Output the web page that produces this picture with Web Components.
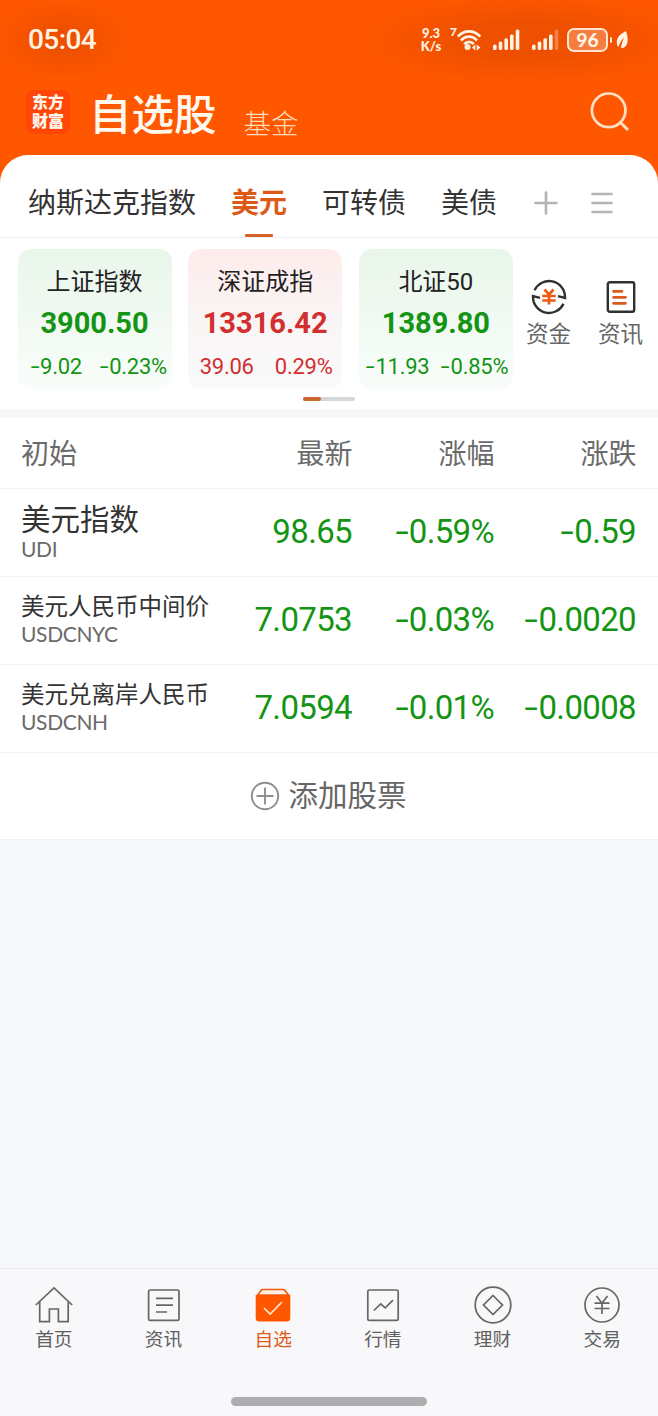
<!DOCTYPE html>
<html lang="zh-CN">
<head>
<meta charset="utf-8">
<meta name="viewport" content="width=device-width, initial-scale=1">
<title>自选股</title>
<style>
  body {
    margin: 0;
    background: #f7f8fa;
    font-family: Roboto, "Noto Sans CJK SC", sans-serif;
  }
</style>
</head>
<body>
<watch-app></watch-app>

<script>
const ICONS = {
  wifi: [26, 26, `
    <g fill="none" stroke="#fff3e4" stroke-width="2.7">
      <path d="M1.800 9.600C8 2.600 18 2.600 24.200 9.600"/>
      <path d="M5 13.500C9.500 8.400 16.500 8.400 21 13.500"/>
      <path d="M8.200 17.200C11 14.200 15 14.200 17.800 17.200"/>
    </g>
    <circle cx="11.500" cy="20" r="3" fill="#fff3e4"/>
    <path fill="#fff3e4" d="M19.300 17.500v6l-3.300-3zM20.700 17.500v6l3.800-3z"/>`],
  signal: [28, 22, `
    <g fill="#fff3e4">
      <rect x="1" y="15.500" width="3.600" height="5.500" rx="1.500"/>
      <rect x="6.700" y="12.500" width="3.600" height="8.500" rx="1.500"/>
      <rect x="12.400" y="9.300" width="3.600" height="11.700" rx="1.500"/>
      <rect x="18" y="5.500" width="3.600" height="15.500" rx="1.500"/>
      <rect class="last" x="23.700" y="0.500" width="3.600" height="20.500" rx="1.500"/>
    </g>`],
  leaf: [14, 18, `
    <path fill="#fff3e4" d="M9.800 0C4.500 3 .8 6 .8 11.500c0 2 .6 3.500 1.700 4.700C3.500 12 5.500 9 8.200 6.200 6.500 10 5.500 13 5 17.300c4.500-.3 6.700-3.800 6.700-8.800 0-3-.9-6-1.900-8.500z"/>`],
  search: [42, 42, `
    <g fill="none" stroke="#ffe0c4" stroke-width="2.700">
      <circle cx="19.700" cy="18.300" r="16.800"/>
      <path d="M31 30l8 8" stroke-width="3"/>
    </g>`],
  plus: [24, 24, `
    <path d="M1.500 12h21M12 1.500v21" fill="none" stroke="#b5b5b5" stroke-width="2.700" stroke-linecap="round"/>`],
  menu: [22, 22, `
    <path d="M1.500 2h19M1.500 11h19M1.500 20h19" fill="none" stroke="#b5b5b5" stroke-width="2.700" stroke-linecap="round"/>`],
  funds: [36, 36, `
    <g fill="none" stroke="#303030" stroke-width="2.400">
      <path d="M3.500 11.300A16 16 0 0 1 34 18v1l-7-1.800"/>
      <path d="M32.500 24.700A16 16 0 0 1 2 18v-1l7 1.800"/>
    </g>
    <path d="M13.500 10.500l4.500 5 4.500-5M11.300 17h13.400M11.300 21.500h13.400M18 16v9.500" fill="none" stroke="#ee5a10" stroke-width="2.700"/>`],
  article: [30, 34, `
    <rect x="1.800" y="2.200" width="26.400" height="29.600" rx="2" fill="none" stroke="#303030" stroke-width="2.400"/>
    <path d="M7.500 11.300h8.500M7.500 17.300h12M7.500 23.300h12" fill="none" stroke="#dd5a1c" stroke-width="2.700" stroke-linecap="round"/>`],
  add: [30, 30, `
    <g fill="none" stroke="#8f8f8f" stroke-width="1.900">
      <circle cx="15" cy="15" r="13.200"/>
      <path d="M6.500 15h17M15 6.500v17"/>
    </g>`],
  home: [40, 40, `
    <path d="M1.800 20L20 2.800 38.200 20M5.700 17v19.700h9.700V24h9v12.700h9.800V17" fill="none" stroke="#666" stroke-width="1.700"/>`],
  news: [40, 40, `
    <g fill="none" stroke="#666" stroke-width="1.700">
      <rect x="4.600" y="5" width="30.400" height="30.400" rx="1.500"/>
      <path d="M12 13.400h17M12 20.200h17M12 27h11"/>
    </g>`],
  watch: [40, 40, `
    <path d="M4.500 10l4.400-5.500h22.200L35.500 10z" fill="#fff1e4" stroke="#ee5a10" stroke-width="1.700"/>
    <path d="M2.700 10h34.600v23a3.500 3.500 0 0 1-3.500 3.500H6.200A3.500 3.500 0 0 1 2.700 33z" fill="#ff5600"/>
    <path d="M11 23l6.200 6L29 17" fill="none" stroke="#ffe9d0" stroke-width="1.700"/>`],
  market: [40, 40, `
    <g fill="none" stroke="#666" stroke-width="1.700">
      <rect x="4.800" y="5" width="30.400" height="30.400" rx="1.500"/>
      <path d="M10.800 25.500l7-6.700 4.400 4L30 15.200"/>
    </g>`],
  wealth: [40, 40, `
    <g fill="none" stroke="#666" stroke-width="1.700">
      <circle cx="20" cy="20" r="17.800"/>
      <path d="M20 10.500l9.500 9.500-9.500 9.500-9.500-9.500z"/>
    </g>`],
  trade: [40, 40, `
    <g fill="none" stroke="#666" stroke-width="1.700">
      <circle cx="20" cy="20" r="17"/>
      <path d="M14.500 11l5.500 7.200 5.500-7.200M12.500 18.200h15M12.500 23.500h15M20 18v11"/>
    </g>`]
};

class UiIcon extends HTMLElement {
  connectedCallback() {
    const [width, height, body] = ICONS[this.getAttribute("name")];
    this.attachShadow({ mode: "open" }).innerHTML = `
      <style>
        :host { display: block; flex: none; }
        :host([weak]) .last { opacity: 0.3; }
        svg { display: block; }
      </style>
      <svg width="${width}" height="${height}" viewBox="0 0 ${width} ${height}">${body}</svg>
    `;
  }
}

class QuoteNumber extends HTMLElement {
  connectedCallback() {
    const value = this.getAttribute("value");
    const negative = value.startsWith("-");
    this.attachShadow({ mode: "open" }).innerHTML = `
      <style>
        :host { display: block; white-space: nowrap; }
        .minus {
          display: inline-block;
          width: 0.46em;
          text-align: center;
          transform: scaleX(1.45);
        }
      </style>
      ${negative ? `<span class="minus">-</span>` : ""}<span>${negative ? value.slice(1) : value}</span>
    `;
  }
}

class StatusBar extends HTMLElement {
  connectedCallback() {
    this.attachShadow({ mode: "open" }).innerHTML = `
      <style>
        :host {
          display: flex;
          align-items: center;
          justify-content: space-between;
          height: 80px;
          box-sizing: border-box;
          padding: 0 28px;
          color: #fff3e4;
          background:
            radial-gradient(ellipse 66px 40px at 62px 40px, rgba(226, 76, 0, 0.6) 25%, transparent),
            radial-gradient(ellipse 160px 44px at 525px 40px, rgba(226, 76, 0, 0.6) 40%, transparent);
        }
        .time { font-size: 28px; font-weight: 500; line-height: 80px; letter-spacing: -0.6px; }
        .right { display: flex; align-items: center; }
        .speed {
          width: 24px;
          text-align: center;
          font: 900 13px/13px Lato, sans-serif;
        }
        .seven { margin: -16px -1px 0 7px; font: 900 12px/12px Lato, sans-serif; }
        .sig1 { margin-left: 10px; }
        .sig2 { margin-left: 11px; }
        .battery {
          box-sizing: border-box;
          width: 41px;
          height: 24px;
          margin-left: 8px;
          border: 2px solid #ffe6d0;
          border-radius: 7px;
          background: #f77c40;
          text-align: center;
          font: 900 19.5px/20px Lato, sans-serif;
        }
        .cap { width: 2px; height: 6px; margin: 0 4px 0 2px; border-radius: 1px; background: #ffe6d0; }
      </style>
      <span class="time">05:04</span>
      <div class="right">
        <div class="speed"><div>9.3</div><div>K/s</div></div>
        <span class="seven">7</span>
        <ui-icon name="wifi"></ui-icon>
        <ui-icon class="sig1" name="signal"></ui-icon>
        <ui-icon class="sig2" name="signal" weak></ui-icon>
        <div class="battery">96</div>
        <div class="cap"></div>
        <ui-icon name="leaf"></ui-icon>
      </div>
    `;
  }
}

class TitleBar extends HTMLElement {
  connectedCallback() {
    this.attachShadow({ mode: "open" }).innerHTML = `
      <style>
        :host { display: flex; height: 75px; padding: 0 27px 0 26px; }
        .logo {
          width: 44px;
          height: 38px;
          margin-top: 10px;
          padding: 3px 0;
          border-radius: 8px;
          background: #ff4606;
          color: #fff6ec;
          text-align: center;
          font-weight: 900;
          font-size: 16px;
          line-height: 19px;
        }
        .main { margin: 6px 0 0 19px; font-size: 42.5px; font-weight: 500; line-height: 60px; color: #fff8ee; }
        .sub { margin: 25px 0 0 27px; font-size: 27.5px; font-weight: 300; line-height: 40px; color: #ffdcba; }
        ui-icon { margin: 12px 0 0 auto; }
      </style>
      <div class="logo"><div>东方</div><div>财富</div></div>
      <div class="main">自选股</div>
      <div class="sub">基金</div>
      <ui-icon name="search"></ui-icon>
    `;
  }
}

class GroupTabs extends HTMLElement {
  connectedCallback() {
    this.attachShadow({ mode: "open" }).innerHTML = `
      <style>
        :host {
          display: flex;
          align-items: center;
          gap: 35px;
          height: 82px;
          padding: 0 28px;
          border-bottom: 1px solid #efefef;
          font-size: 28px;
          color: #333;
        }
        .tab { position: relative; line-height: 82px; margin-top: 16px; white-space: nowrap; }
        .active { color: #dc5a16; font-weight: 700; }
        .active::after {
          content: "";
          position: absolute;
          left: 14px;
          bottom: 8px;
          width: 28px;
          height: 3px;
          border-radius: 1px;
          background: #d8622a;
        }
        ui-icon { margin: 13px 0 0 2px; }
        .menu { margin-left: -2px; }
      </style>
      <span class="tab">纳斯达克指数</span>
      <span class="tab active">美元</span>
      <span class="tab">可转债</span>
      <span class="tab">美债</span>
      <ui-icon name="plus"></ui-icon>
      <ui-icon class="menu" name="menu"></ui-icon>
    `;
  }
}

class IndexCard extends HTMLElement {
  connectedCallback() {
    this.attachShadow({ mode: "open" }).innerHTML = `
      <style>
        :host {
          display: block;
          flex: none;
          width: 154px;
          height: 140px;
          border-radius: 13px;
          background: linear-gradient(#e9f6ea, #f9fdfa);
          color: #149414;
          text-align: center;
        }
        :host([trend="up"]) { background: linear-gradient(#ffebeb, #f9f5f5 50%, #fafafa); color: #d22f2f; }
        .name { padding-top: 15px; font-size: 24px; line-height: 36px; color: #222; }
        .price { margin-top: 5px; font-size: 29px; font-weight: 700; line-height: 36px; }
        .change { display: grid; grid-template-columns: 77px 77px; margin-top: 12px; font-size: 22px; line-height: 28px; letter-spacing: -0.25px; }
        .change > * { justify-self: center; }
      </style>
      <div class="name"><slot></slot></div>
      <div class="price">${this.getAttribute("price")}</div>
      <div class="change">
        <quote-number value="${this.getAttribute("diff")}"></quote-number>
        <quote-number value="${this.getAttribute("rate")}"></quote-number>
      </div>
    `;
  }
}

class QuickLink extends HTMLElement {
  connectedCallback() {
    this.attachShadow({ mode: "open" }).innerHTML = `
      <style>
        :host {
          display: flex;
          flex-direction: column;
          align-items: center;
          width: 72px;
          padding-top: 30px;
          font-size: 22.5px;
          line-height: 38px;
          color: #666;
        }
        .icon { display: flex; align-items: center; height: 36px; }
      </style>
      <div class="icon"><ui-icon name="${this.getAttribute("icon")}"></ui-icon></div>
      <slot></slot>
    `;
  }
}

class IndexStrip extends HTMLElement {
  connectedCallback() {
    this.attachShadow({ mode: "open" }).innerHTML = `
      <style>
        :host { display: block; height: 171px; border-bottom: 9px solid #f6f7f9; }
        .cards { display: flex; gap: 16.7px; padding: 11px 0 0 17.5px; }
        .links { display: flex; margin-left: -17px; }
        .pager { width: 52px; height: 4px; margin: 8px auto 0; border-radius: 2px; background: #d6d6da; }
        .pager div { width: 18px; height: 4px; border-radius: 2px; background: #cf6830; }
      </style>
      <div class="cards">
        <index-card price="3900.50" diff="-9.02" rate="-0.23%">上证指数</index-card>
        <index-card price="13316.42" diff="39.06" rate="0.29%" trend="up">深证成指</index-card>
        <index-card price="1389.80" diff="-11.93" rate="-0.85%">北证50</index-card>
        <div class="links">
          <quick-link icon="funds">资金</quick-link>
          <quick-link icon="article">资讯</quick-link>
        </div>
      </div>
      <div class="pager"><div></div></div>
    `;
  }
}

class QuoteRow extends HTMLElement {
  connectedCallback() {
    this.attachShadow({ mode: "open" }).innerHTML = `
      <style>
        :host {
          display: grid;
          grid-template-columns: 210px 121px 142px 142px;
          align-items: center;
          height: 87px;
          padding-left: 21px;
          border-bottom: 1px solid #f2f2f2;
        }
        .name { margin-top: -5px; font-size: 23.5px; line-height: 32px; color: #333; white-space: nowrap; }
        .code { margin-top: -1px; font-size: 21px; line-height: 24px; color: #6a6a6a; font-family: Lato, sans-serif; letter-spacing: -0.35px; }
        :host([large]) .name { margin-top: -3px; font-size: 29.5px; line-height: 36px; }
        quote-number { margin-top: -2px; text-align: right; font-size: 33px; letter-spacing: -0.65px; color: #149414; }
      </style>
      <div>
        <div class="name"><slot></slot></div>
        <div class="code">${this.getAttribute("code")}</div>
      </div>
      <quote-number value="${this.getAttribute("last")}"></quote-number>
      <quote-number value="${this.getAttribute("rate")}"></quote-number>
      <quote-number value="${this.getAttribute("diff")}"></quote-number>
    `;
  }
}

class QuoteTable extends HTMLElement {
  connectedCallback() {
    this.attachShadow({ mode: "open" }).innerHTML = `
      <style>
        :host { display: block; }
        .head {
          display: grid;
          grid-template-columns: 210px 121.5px 142px 142px;
          height: 70px;
          padding-left: 21px;
          border-bottom: 1px solid #f2f2f2;
          font-size: 28px;
          line-height: 73px;
          color: #6a6a6a;
        }
        .head span + span { text-align: right; }
        .add {
          display: flex;
          align-items: center;
          justify-content: center;
          gap: 8px;
          height: 86px;
          margin-left: -1px;
          border-bottom: 1px solid #f0f1f3;
          font-size: 29.5px;
          line-height: 86px;
          color: #666;
        }
      </style>
      <div class="head"><span>初始</span><span>最新</span><span>涨幅</span><span>涨跌</span></div>
      <quote-row large code="UDI" last="98.65" rate="-0.59%" diff="-0.59">美元指数</quote-row>
      <quote-row code="USDCNYC" last="7.0753" rate="-0.03%" diff="-0.0020">美元人民币中间价</quote-row>
      <quote-row code="USDCNH" last="7.0594" rate="-0.01%" diff="-0.0008">美元兑离岸人民币</quote-row>
      <div class="add"><ui-icon name="add"></ui-icon><span>添加股票</span></div>
    `;
  }
}

class NavItem extends HTMLElement {
  connectedCallback() {
    this.attachShadow({ mode: "open" }).innerHTML = `
      <style>
        :host {
          display: flex;
          flex: 1;
          flex-direction: column;
          align-items: center;
          padding-top: 16px;
          font-size: 18.7px;
          line-height: 31px;
          color: #606060;
        }
        :host([active]) { color: #dc5a16; }
      </style>
      <ui-icon name="${this.getAttribute("icon")}"></ui-icon>
      <slot></slot>
    `;
  }
}

class BottomNav extends HTMLElement {
  connectedCallback() {
    this.attachShadow({ mode: "open" }).innerHTML = `
      <style>
        :host { display: block; height: 147px; border-top: 1px solid #ececee; background: #f8f8fa; }
        .items { display: flex; height: 128px; margin: 0 1px 0 -1px; }
        .handle { width: 196px; height: 9px; margin: 0 auto; border-radius: 5px; background: #aeaeb0; }
      </style>
      <div class="items">
        <nav-item icon="home">首页</nav-item>
        <nav-item icon="news">资讯</nav-item>
        <nav-item icon="watch" active>自选</nav-item>
        <nav-item icon="market">行情</nav-item>
        <nav-item icon="wealth">理财</nav-item>
        <nav-item icon="trade">交易</nav-item>
      </div>
      <div class="handle"></div>
    `;
  }
}

class WatchApp extends HTMLElement {
  connectedCallback() {
    this.attachShadow({ mode: "open" }).innerHTML = `
      <style>
        :host { display: flex; flex-direction: column; height: 1416px; overflow: hidden; }
        .top { background: #ff5600; }
        .panel { background: #fff; border-radius: 28px 28px 0 0; }
        bottom-nav { margin-top: auto; }
      </style>
      <div class="top">
        <status-bar></status-bar>
        <title-bar></title-bar>
        <div class="panel">
          <group-tabs></group-tabs>
          <index-strip></index-strip>
          <quote-table></quote-table>
        </div>
      </div>
      <bottom-nav></bottom-nav>
    `;
  }
}

customElements.define("ui-icon", UiIcon);
customElements.define("quote-number", QuoteNumber);
customElements.define("status-bar", StatusBar);
customElements.define("title-bar", TitleBar);
customElements.define("group-tabs", GroupTabs);
customElements.define("index-card", IndexCard);
customElements.define("quick-link", QuickLink);
customElements.define("index-strip", IndexStrip);
customElements.define("quote-row", QuoteRow);
customElements.define("quote-table", QuoteTable);
customElements.define("nav-item", NavItem);
customElements.define("bottom-nav", BottomNav);
customElements.define("watch-app", WatchApp);
</script>
</body>
</html>
